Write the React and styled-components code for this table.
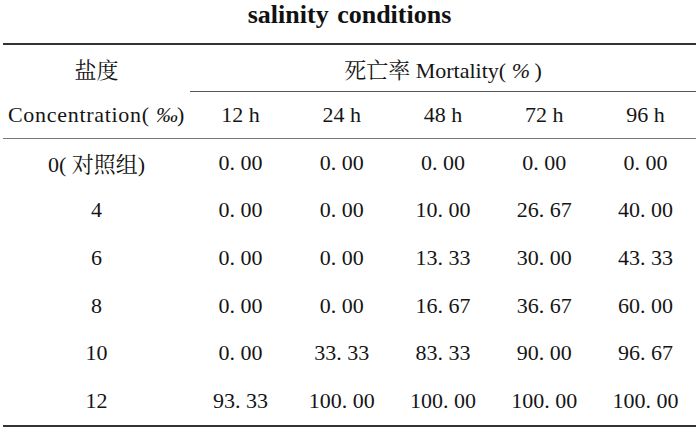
import styled, { createGlobalStyle } from 'styled-components';

const GlobalStyle = createGlobalStyle`
    body {
        margin: 0;
        background: #fff;
    }
`

const Page = styled.div`
    width: 696px;
    padding-left: 3px;
    box-sizing: border-box;
    color: #151515;
    font-family: "Liberation Serif", "Noto Serif CJK SC", serif;
`

const Title = styled.h2`
    margin: 0;
    padding-top: 2px;
    height: 41px;
    text-align: center;
    font-family: "Liberation Serif", serif;
    font-size: 26px;
    font-weight: bold;
    line-height: 26px;
    word-spacing: 2px;
    color: #111;
`

const Table = styled.table`
    width: 100%;
    border-collapse: collapse;
    table-layout: fixed;
    border-top: 2px solid #333;
    border-bottom: 2px solid #333;
`

const Cell = styled.td`
    height: ${props => props.h || 47}px;
    padding: 0;
    text-align: center;
    vertical-align: middle;
    font-family: "Liberation Serif", "Noto Serif CJK SC", serif;
    font-size: 22px;
    color: #151515;
    white-space: nowrap;
    letter-spacing: ${props => props.wide ? '0.7px' : '0'};
    border-bottom: ${props => props.line === 'sub' ? '1px solid #555' : props.line === 'head' ? '1.5px solid #777' : 'none'};
`

const Cn = styled.span`
    font-family: "Noto Serif CJK SC", serif;
    font-size: 22px;
    letter-spacing: 0;
`

const Per = styled.i`
    font-family: "Liberation Serif", serif;
    letter-spacing: -1px;
`

const times = ['12 h', '24 h', '48 h', '72 h', '96 h'];

const rows = [
    ['0', ['0. 00', '0. 00', '0. 00', '0. 00', '0. 00']],
    ['4', ['0. 00', '0. 00', '10. 00', '26. 67', '40. 00']],
    ['6', ['0. 00', '0. 00', '13. 33', '30. 00', '43. 33']],
    ['8', ['0. 00', '0. 00', '16. 67', '36. 67', '60. 00']],
    ['10', ['0. 00', '33. 33', '83. 33', '90. 00', '96. 67']],
    ['12', ['93. 33', '100. 00', '100. 00', '100. 00', '100. 00']],
];

const App = () => {
  return (
    <Page>
        <GlobalStyle />
        <Title>salinity conditions</Title>
        <Table>
            <colgroup>
                <col style={{ width: '187px' }} />
                <col /><col /><col /><col /><col />
            </colgroup>
            <tbody>
                <tr>
                    <Cell h={46}><Cn>盐度</Cn></Cell>
                    <Cell h={46} colSpan={5} line="sub"><Cn>死亡率</Cn> Mortality( <Per>%</Per> )</Cell>
                </tr>
                <tr>
                    <Cell h={46} line="head" wide>Concentration( <Per>‰</Per>)</Cell>
                    {times.map(t => <Cell key={t} h={46} line="head">{t}</Cell>)}
                </tr>
                {rows.map(([salt, vals], i) => (
                    <tr key={salt}>
                        <Cell h={47.6}>
                            {i === 0 ? <>0( <Cn>对照组</Cn>)</> : salt}
                        </Cell>
                        {vals.map((v, j) => <Cell key={j} h={47.6}>{v}</Cell>)}
                    </tr>
                ))}
            </tbody>
        </Table>
    </Page>
  )
}

export default App
